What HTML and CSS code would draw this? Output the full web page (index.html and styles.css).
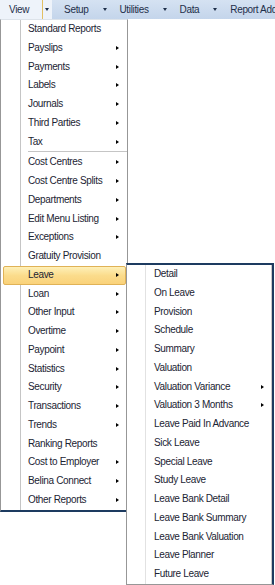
FILE: index.html
```html
<!DOCTYPE html>
<html lang="en">
    <head>
        <title>Reports Menu</title>
        <link rel="stylesheet" href="styles.css">
    </head>
    <body>
<div class="toolbar">
    <div class="tb-item active"><span class="tb-btn">View</span><span class="tb-drop"></span></div>
    <div class="tb-item"><span class="tb-btn">Setup</span><span class="tb-drop"></span></div>
    <div class="tb-item"><span class="tb-btn">Utilities</span><span class="tb-drop"></span></div>
    <div class="tb-item"><span class="tb-btn">Data</span><span class="tb-drop"></span></div>
    <div class="tb-item"><span class="tb-btn">Report Add-ins</span></div>
</div>
<ul class="menu main">
    <li>Standard Reports</li>
    <li class="sub">Payslips</li>
    <li class="sub">Payments</li>
    <li class="sub">Labels</li>
    <li class="sub">Journals</li>
    <li class="sub">Third Parties</li>
    <li class="sub">Tax</li>
    <li class="sep"></li>
    <li class="sub">Cost Centres</li>
    <li class="sub">Cost Centre Splits</li>
    <li class="sub">Departments</li>
    <li class="sub">Edit Menu Listing</li>
    <li class="sub">Exceptions</li>
    <li>Gratuity Provision</li>
    <li class="sub hot">Leave
        <ul class="menu popup">
            <li>Detail</li>
            <li>On Leave</li>
            <li>Provision</li>
            <li>Schedule</li>
            <li>Summary</li>
            <li>Valuation</li>
            <li class="sub">Valuation Variance</li>
            <li class="sub">Valuation 3 Months</li>
            <li>Leave Paid In Advance</li>
            <li>Sick Leave</li>
            <li>Special Leave</li>
            <li>Study Leave</li>
            <li>Leave Bank Detail</li>
            <li>Leave Bank Summary</li>
            <li>Leave Bank Valuation</li>
            <li>Leave Planner</li>
            <li>Future Leave</li>
        </ul>
    </li>
    <li class="sub">Loan</li>
    <li class="sub">Other Input</li>
    <li class="sub">Overtime</li>
    <li class="sub">Paypoint</li>
    <li class="sub">Statistics</li>
    <li class="sub">Security</li>
    <li class="sub">Transactions</li>
    <li class="sub">Trends</li>
    <li>Ranking Reports</li>
    <li class="sub">Cost to Employer</li>
    <li class="sub">Belina Connect</li>
    <li class="sub">Other Reports</li>
</ul>
    </body>
</html>
```

FILE: styles.css
```css
body {
    margin: 0;
    min-height: 585px;
    background: #fff;
    font-family: "Liberation Sans", Arial, sans-serif;
    font-size: 10px;
    letter-spacing: -0.35px;
    color: #1b2433;
}

/* top menu strip */
.toolbar {
    display: flex;
    height: 19px;
    background: linear-gradient(#d5e2f2, #c4d5eb);
    white-space: nowrap;
    overflow: hidden;
}
.tb-item {
    display: flex;
    margin-right: 3px;
}
.tb-btn {
    padding: 0 12px 0 7px;
    line-height: 19px;
    color: #1e2f4a;
}
.tb-drop {
    position: relative;
    width: 9px;
}
.tb-drop:after {
    content: "";
    position: absolute;
    left: 2px;
    top: 8px;
    border-top: 3px solid #1e2f4a;
    border-left: 2.5px solid transparent;
    border-right: 2.5px solid transparent;
}
.tb-item.active {
    margin-right: 5px;
}
.tb-item.active .tb-btn {
    padding: 0 13px 0 9px;
    background: #eef3fa;
    border-right: 1px solid #e3c063;
}
.tb-item.active .tb-drop {
    background: #eef3fa;
}

/* dropdown menus */
.menu {
    list-style: none;
    margin: 0;
    padding: 0;
}
.menu li {
    position: relative;
    box-sizing: border-box;
    height: 18.75px;
    line-height: 18.75px;
    padding-left: 27px;
    white-space: nowrap;
}
.menu li.sub:after {
    content: "";
    position: absolute;
    right: 8px;
    top: 7px;
    border-left: 3px solid #000;
    border-top: 2.5px solid transparent;
    border-bottom: 2.5px solid transparent;
}
.main {
    width: 126px;
    border: 1px solid #979797;
    border-top-color: #dde3ea;
    border-bottom: 2px solid #1d3b60;
    background: linear-gradient(to right, #fff 19px, #c5c5c5 19px, #c5c5c5 20px, #fff 20px);
}
.main li.sep {
    height: 2px;
    margin-left: 27px;
    padding: 0;
    border-top: 1px solid #c5c5c5;
    border-bottom: 1px solid #fff;
}
.main li.hot {
    margin: 0 1px 0 2px;
    padding-left: 24px;
    line-height: 16.75px;
    border: 1px solid #e0b256;
    border-radius: 2px;
    background: linear-gradient(#fef0b8, #fbdc8c 50%, #fad27a);
}
.main li.hot:after {
    right: 6px;
    top: 6px;
}
.popup {
    position: absolute;
    left: 122px;
    top: -3.75px;
    width: 145px;
    border-left: 1px solid #979797;
    border-top: 2px solid #1d3b60;
    border-right: 2px solid #1d3b60;
    border-bottom: 1px solid #979797;
    background: linear-gradient(to right, #fff 18px, #e2e2e2 18px, #e2e2e2 19px, #fff 19px, #fff 144px, #c8c8c8 144px);
    line-height: 18.75px;
}
```
